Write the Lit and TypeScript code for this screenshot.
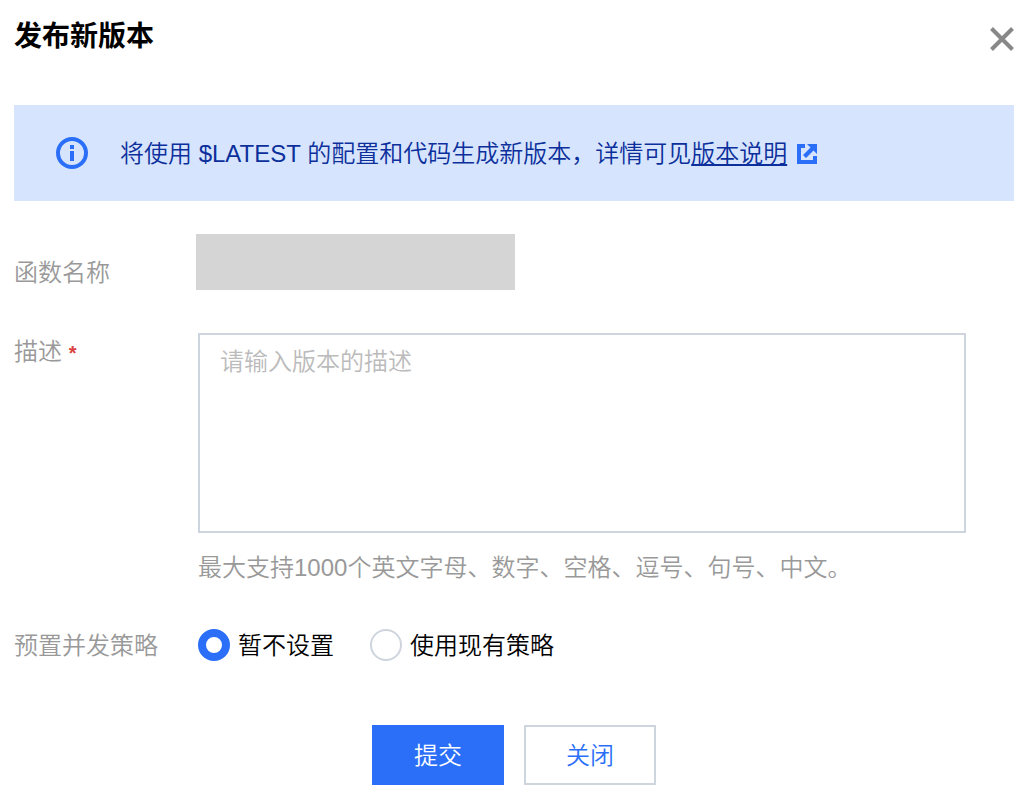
import { LitElement, html, css } from "lit";
import { customElement, state } from "lit/decorators.js";

@customElement("app-root")
export class AppRoot extends LitElement {
  @state() private policy = "none";

  static styles = css`
    :host {
      display: block;
      font-family: "Liberation Sans", "Noto Sans CJK SC", sans-serif;
      font-size: 24px;
      font-weight: 350;
      line-height: 36px;
      color: #000;
      background: #fff;
    }
    * {
      box-sizing: border-box;
    }
    .dialog {
      padding: 17px 20px 9px 14px;
    }
    .header {
      display: flex;
      justify-content: space-between;
      align-items: flex-start;
      margin-bottom: 48px;
    }
    .title {
      margin: 0;
      font-size: 28px;
      font-weight: 700;
      line-height: 40px;
    }
    .close {
      display: flex;
      margin: 0;
      padding: 10px 0 0;
      border: 0;
      background: none;
      cursor: pointer;
    }
    .notice {
      display: flex;
      align-items: center;
      gap: 32px;
      padding: 30px 42px;
      background: #d6e5fd;
      color: #0c2f9c;
    }
    .notice-icon {
      flex: none;
    }
    .notice-text {
      margin: 0;
      padding-top: 2px;
      line-height: 34px;
    }
    .link {
      color: inherit;
      text-decoration: underline;
      text-decoration-thickness: 2px;
      text-underline-offset: 2px;
    }
    .external {
      margin-left: 10px;
      vertical-align: -2px;
    }
    .form {
      display: grid;
      gap: 43px;
      margin: 33px 0 0;
    }
    .row {
      display: grid;
      grid-template-columns: 182px minmax(0, 1fr);
    }
    .label {
      padding-top: 2px;
      line-height: 34px;
      color: #999;
    }
    .label-end {
      align-self: end;
    }
    .required {
      color: #d9413d;
      font-size: 20px;
      font-weight: 700;
    }
    .masked {
      display: block;
      width: 319px;
      max-width: 100%;
      height: 56px;
      background: #d5d5d5;
    }
    .control {
      padding: 0 48px 0 2px;
    }
    .textarea {
      display: block;
      width: 100%;
      height: 200px;
      margin: 0;
      padding: 9px 20px;
      border: 2px solid #cfd5de;
      border-radius: 0;
      outline: none;
      resize: none;
      background: #fff;
      color: #000;
      font: inherit;
    }
    .textarea::placeholder {
      color: #bbb;
      opacity: 1;
    }
    .hint {
      margin: 19px 0 0;
      line-height: 32px;
      color: #999;
    }
    .options {
      display: flex;
      flex-wrap: wrap;
      gap: 36px;
    }
    .option {
      display: flex;
      align-items: center;
      gap: 8px;
      cursor: pointer;
    }
    .option-text {
      padding-top: 2px;
      line-height: 34px;
    }
    .radio {
      appearance: none;
      flex: none;
      width: 32px;
      height: 32px;
      margin: 0;
      border: 2px solid #cfd5de;
      border-radius: 50%;
      background: #fff;
    }
    .radio:checked {
      border: 8px solid #2b6ff9;
    }
    .footer {
      display: flex;
      justify-content: center;
      gap: 20px;
      margin-top: 62px;
    }
    .button {
      width: 132px;
      height: 60px;
      padding: 2px 0 0;
      border: 2px solid #cfd5de;
      background: #fff;
      color: #2b6ff9;
      font: inherit;
      cursor: pointer;
    }
    .primary {
      border-color: #2b6ff9;
      background: #2b6ff9;
      color: #fff;
    }
  `;

  private pick(value: string) {
    this.policy = value;
  }

  private renderOption(value: string, text: string) {
    return html`<label class="option">
      <input
        class="radio"
        type="radio"
        name="policy"
        .checked=${this.policy === value}
        @change=${() => this.pick(value)}
      />
      <span class="option-text">${text}</span>
    </label>`;
  }

  render() {
    return html`
      <section class="dialog" role="dialog" aria-labelledby="title">
        <header class="header">
          <h1 class="title" id="title">发布新版本</h1>
          <button class="close" type="button" aria-label="关闭">
            <svg width="24" height="24" viewBox="0 0 24 24" fill="none" stroke="#888" stroke-width="4">
              <path d="M1.5 1.5 22.5 22.5M22.5 1.5 1.5 22.5" />
            </svg>
          </button>
        </header>

        <div class="notice">
          <svg class="notice-icon" width="32" height="32" viewBox="0 0 32 32" fill="#2b6ff9">
            <circle cx="16" cy="16" r="14" fill="none" stroke="#2b6ff9" stroke-width="4" />
            <path d="M14 8h4v4h-4zM14 14h4v10h-4z" />
          </svg>
          <p class="notice-text">
            将使用 $LATEST 的配置和代码生成新版本，详情可见<a class="link" href="#">版本说明</a><svg
              class="external"
              width="20"
              height="20"
              viewBox="0 0 20 20"
              fill="#2b6ff9"
            >
              <path d="M0 0h8v4H4v12h12v-4h4v8H0z" />
              <path d="M10 0h10v10l-3.5-3.5-7.5 7.5-3-3 7.5-7.5z" />
            </svg>
          </p>
        </div>

        <form class="form" @submit=${(e: Event) => e.preventDefault()}>
          <div class="row">
            <span class="label label-end">函数名称</span>
            <span class="masked"></span>
          </div>

          <div class="row">
            <label class="label" for="desc">描述 <span class="required">*</span></label>
            <div class="control">
              <textarea class="textarea" id="desc" placeholder="请输入版本的描述" required></textarea>
              <p class="hint">最大支持1000个英文字母、数字、空格、逗号、句号、中文。</p>
            </div>
          </div>

          <div class="row" role="radiogroup" aria-labelledby="policy-label">
            <span class="label" id="policy-label">预置并发策略</span>
            <div class="control options">
              ${this.renderOption("none", "暂不设置")}
              ${this.renderOption("existing", "使用现有策略")}
            </div>
          </div>
        </form>

        <footer class="footer">
          <button class="button primary" type="button">提交</button>
          <button class="button" type="button">关闭</button>
        </footer>
      </section>
    `;
  }
}
